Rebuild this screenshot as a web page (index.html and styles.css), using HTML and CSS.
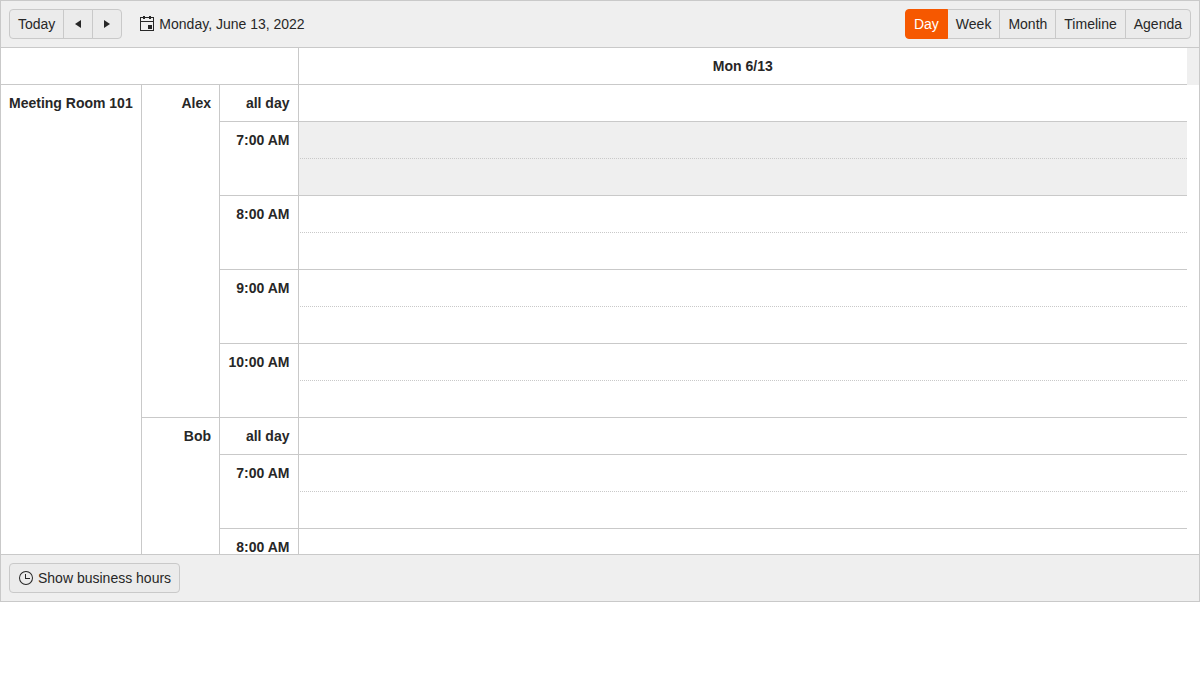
FILE: index.html
```
<!DOCTYPE html>
<html lang="en">
<head>
<meta charset="utf-8">
<title>Scheduler</title>
<link rel="stylesheet" href="styles.css">
</head>
<body>
<div class="scheduler">
  <div class="toolbar">
    <div class="button-group">
      <button class="button">Today</button>
      <button class="button icon-button" aria-label="Previous"><svg width="16" height="16" viewBox="0 0 16 16"><path d="M11 4v8L5 8z"/></svg></button>
      <button class="button icon-button" aria-label="Next"><svg width="16" height="16" viewBox="0 0 16 16"><path d="M5 4v8l6-4z"/></svg></button>
    </div>
    <div class="current-date">
      <svg width="16" height="16" viewBox="0 0 16 16"><path fill-rule="evenodd" d="M4 0h2v1h4V0h2v1h3v14H1V1h3zM2 2v3h12V2h-2v1h-2V2H6v1H4V2zM2 6v8h12V6zM9 9h4v4H9z"/></svg>
      <span>Monday, June 13, 2022</span>
    </div>
    <div class="button-group views">
      <button class="button selected">Day</button>
      <button class="button">Week</button>
      <button class="button">Month</button>
      <button class="button">Timeline</button>
      <button class="button">Agenda</button>
    </div>
  </div>
  <div class="header">
    <div class="header-corner"></div>
    <div class="header-date">Mon 6/13</div>
    <div class="header-gutter"></div>
  </div>
  <div class="content">
    <div class="room">Meeting Room 101</div>
    <div class="people">
      <div class="person">
        <div class="name">Alex</div>
        <div class="times">
          <div class="time all-day">all day</div>
          <div class="time">7:00 AM</div>
          <div class="time">8:00 AM</div>
          <div class="time">9:00 AM</div>
          <div class="time">10:00 AM</div>
        </div>
        <div class="slots">
          <div class="slot"></div>
          <div class="slot half off"></div><div class="slot off"></div>
          <div class="slot half"></div><div class="slot"></div>
          <div class="slot half"></div><div class="slot"></div>
          <div class="slot half"></div><div class="slot"></div>
        </div>
      </div>
      <div class="person">
        <div class="name">Bob</div>
        <div class="times">
          <div class="time all-day">all day</div>
          <div class="time">7:00 AM</div>
          <div class="time">8:00 AM</div>
        </div>
        <div class="slots">
          <div class="slot"></div>
          <div class="slot half"></div><div class="slot"></div>
          <div class="slot half"></div><div class="slot"></div>
        </div>
      </div>
    </div>
  </div>
  <div class="footer">
    <button class="button hours-button">
      <svg width="16" height="16" viewBox="0 0 16 16"><path fill-rule="evenodd" d="M8 1a7 7 0 1 0 0 14A7 7 0 0 0 8 1zm0 13A6 6 0 1 1 8 2a6 6 0 0 1 0 12zM7 4h1v4h4v1H7z"/></svg>
      <span>Show business hours</span>
    </button>
  </div>
</div>
</body>
</html>
```

FILE: styles.css
```
* { box-sizing: border-box; }

body {
  margin: 0;
  background: #fff;
  color: #272727;
  font: 14px/20px "Liberation Sans", Arial, sans-serif;
}

svg { display: block; flex: none; fill: currentColor; }

.scheduler {
  height: 602px;
  border: 1px solid #c9c9c9;
  display: flex;
  flex-direction: column;
}

.toolbar {
  flex: none;
  height: 47px;
  padding: 8px;
  border-bottom: 1px solid #c9c9c9;
  background: #efefef;
  display: flex;
  align-items: center;
}

.button-group { display: flex; }

.button {
  height: 30px;
  margin: 0;
  padding: 4px 8px;
  border: 1px solid #c9c9c9;
  border-radius: 4px;
  background: #ebebeb;
  color: inherit;
  font: inherit;
  display: flex;
  align-items: center;
  justify-content: center;
}

.button-group .button { border-radius: 0; }
.button-group .button + .button { margin-left: -1px; }
.button-group .button:first-child { border-radius: 4px 0 0 4px; }
.button-group .button:last-child { border-radius: 0 4px 4px 0; }
.icon-button { width: 30px; padding: 0; }

.button.selected {
  position: relative;
  border-color: #f65800;
  background: #f65800;
  color: #fff;
}

.current-date {
  margin-left: 17px;
  display: flex;
  align-items: center;
  gap: 4px;
}

.views { margin-left: auto; }

.header {
  flex: none;
  height: 37px;
  display: flex;
  font-weight: bold;
}

.header-corner { width: 296.5px; border-bottom: 1px solid #c9c9c9; }

.header-date {
  flex: 1;
  padding: 8px;
  border-left: 1px solid #c9c9c9;
  border-bottom: 1px solid #c9c9c9;
  text-align: center;
}

.header-gutter { width: 12px; background: #efefef; }

.content {
  flex: 1;
  min-height: 0;
  overflow: hidden;
  padding-right: 12px;
  display: flex;
  font-weight: bold;
}

.room {
  width: 141px;
  padding: 8px;
  border-right: 1px solid #c9c9c9;
  white-space: nowrap;
}

.people { flex: 1; }
.person { display: flex; }

.name {
  width: 78px;
  padding: 8px;
  border-right: 1px solid #c9c9c9;
  border-bottom: 1px solid #c9c9c9;
  text-align: right;
}

.times { width: 77.5px; }

.time {
  height: 74px;
  padding: 8px;
  border-bottom: 1px solid #c9c9c9;
  text-align: right;
  white-space: nowrap;
}

.time.all-day { height: 37px; }

.slots { flex: 1; }

.slot {
  height: 37px;
  border-left: 1px solid #c9c9c9;
  border-bottom: 1px solid #c9c9c9;
}

.slot.half { border-bottom-style: dotted; }
.slot.off { background: #efefef; }

.footer {
  flex: none;
  height: 47px;
  padding: 8px;
  border-top: 1px solid #c9c9c9;
  background: #efefef;
}

.hours-button { gap: 4px; }
```
